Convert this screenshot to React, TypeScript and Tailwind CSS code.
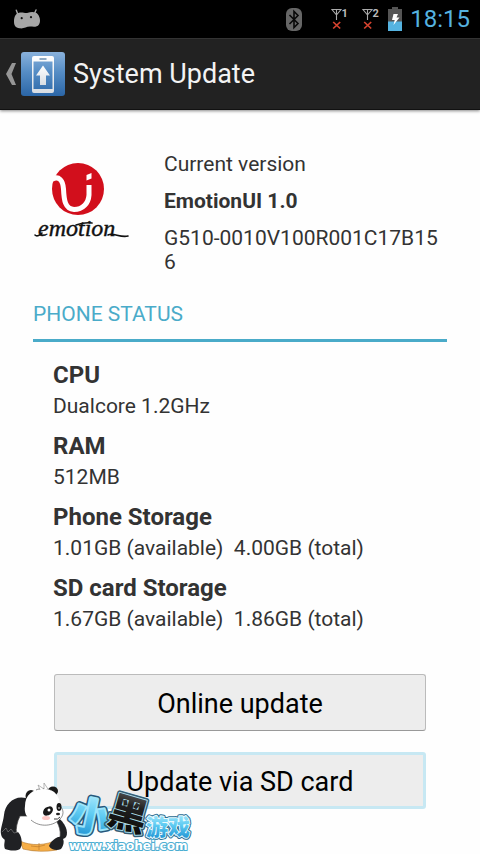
const specs = [
  { name: "CPU", value: "Dualcore 1.2GHz" },
  { name: "RAM", value: "512MB" },
  { name: "Phone Storage", value: "1.01GB (available)\u00a0 4.00GB (total)" },
  { name: "SD card Storage", value: "1.67GB (available)\u00a0 1.86GB (total)" },
];

function AndroidHead() {
  return (
    <svg className="h-5 w-7" viewBox="0 0 28 20" aria-hidden="true">
      <path d="M3.3 1.2 5 5.8M23 1 21.4 4.8" stroke="#a6a6a6" strokeWidth="1.4" strokeLinecap="round" />
      <path d="M6 3.7C10 3 12 4.500 15 3.800C18 2.600 23 2.500 25 5.500C27.500 9 27.500 13 26 15.500C24 18.500 20.500 17.600 17 17.600C13 17.600 11 20 6.500 19.300C2.600 18.700 1 16.500 1 12.500C1 8 2.500 4.600 6 3.700Z" fill="#a6a6a6" />
      <circle cx="8.700" cy="9.200" r="1.100" fill="#111" />
      <circle cx="18" cy="8.200" r="1.100" fill="#111" />
    </svg>
  );
}

function Bluetooth() {
  return (
    <svg className="h-[23px] w-4" viewBox="0 0 16 23" aria-hidden="true">
      <rect x="0" y="0" width="16" height="23" rx="6" fill="#666" />
      <path d="M3.500 7 12 15.500 8 19.500V3.500L12 7.500 3.500 16" fill="none" stroke="#080808" strokeWidth="1.600" />
    </svg>
  );
}

function Signal({ slot }: { slot: string }) {
  return (
    <svg className="h-6 w-[18px]" viewBox="0 0 18 24" aria-label={`SIM ${slot} no signal`}>
      <path d="M1 2.500H10L5.500 8ZM5.500 2.500V13" fill="none" stroke="#aaa" strokeWidth="1.100" />
      <path d="M2.200 15 9.200 21.500M9.200 15 2.200 21.500" stroke="#d6432f" strokeWidth="1.700" />
      <text x="10.500" y="10" fill="#bbb" fontFamily="Roboto, sans-serif" fontWeight="700" fontSize="11">{slot}</text>
    </svg>
  );
}

function Battery() {
  return (
    <svg className="h-6 w-3.5" viewBox="0 0 14 24" aria-hidden="true">
      <path d="M4 0h6v2h4v13H0V2h4Z" fill="#555" />
      <path d="M0 14.500h14V24H0Z" fill="#55b3e0" />
      <path d="M5.500 7H10L8.500 10.500H11.500L5.500 18 6.700 13H4Z" fill="#fff" />
    </svg>
  );
}

function UpdateIcon() {
  return (
    <svg className="h-11 w-11" viewBox="0 0 44 44" aria-hidden="true">
      <defs>
        <linearGradient id="tile" x1="0" y1="0" x2="0" y2="1">
          <stop offset="0" stopColor="#8ab2dc" />
          <stop offset=".45" stopColor="#568dc5" />
          <stop offset="1" stopColor="#2b66a7" />
        </linearGradient>
        <linearGradient id="metal" x1="0" y1="0" x2="0" y2="1">
          <stop offset="0" stopColor="#fff" />
          <stop offset="1" stopColor="#d8dde3" />
        </linearGradient>
      </defs>
      <rect width="44" height="44" rx="3" fill="url(#tile)" />
      <path fillRule="evenodd" d="M13 4h18q2 0 2 2v33q0 2-2 2H13q-2 0-2-2V6q0-2 2-2ZM12.500 9.500v27.500h19V9.500Z" fill="url(#metal)" />
      <path d="M18.500 7h7" stroke="#557da5" strokeWidth="1.300" />
      <path d="M22 13.500 29 23.500H25V33H19V23.500H15Z" fill="url(#metal)" />
    </svg>
  );
}

function EmotionLogo() {
  return (
    <svg className="h-24 w-24" viewBox="0 0 96 96" aria-label="emotion UI">
      <circle cx="45" cy="37" r="26" fill="#d20f1c" />
      <path d="M19 27.500C26 23 30 29 30.500 37C31 48 32 57 41 57.500C50 57.500 55.500 51 56 43V33" fill="none" stroke="#fff" strokeWidth="5" />
      <path d="M53.500 23 58.500 21V26.500L53.500 28.500Z" fill="#fff" />
      <text x="5" y="84" fill="#111" stroke="#111" strokeWidth=".400" fontFamily="Liberation Serif, serif" fontStyle="italic" fontSize="24">emotion</text>
      <path d="M2 83C4 85 7 83 9 81M75 83C80 80 87 86 95 84M43 73C49 71 53 70 59 71" fill="none" stroke="#111" strokeWidth="1.600" strokeLinecap="round" />
    </svg>
  );
}

function Watermark() {
  return (
    <svg className="pointer-events-none absolute bottom-0 left-0 h-[104px] w-[220px]" viewBox="0 -30 220 104" aria-label="小黑游戏 www.xiaohei.com">
      <defs>
        <linearGradient id="ice" x1="0" y1="0" x2="0" y2="1">
          <stop offset="0" stopColor="#c5f4ff" />
          <stop offset=".5" stopColor="#5ecbf2" />
          <stop offset="1" stopColor="#168bcf" />
        </linearGradient>
        <linearGradient id="ink" x1="0" y1="0" x2="0" y2="1">
          <stop offset="0" stopColor="#777" />
          <stop offset=".4" stopColor="#222" />
          <stop offset="1" stopColor="#050505" />
        </linearGradient>
      </defs>
      <path d="M26 18C14 15 5 24 4 35C3 43 0 49 1 54C2 60 7 61 11 59L20 49 31 29Z" fill="#202124" />
      <path d="M57 37C65 42 69 52 66 57C64 60 58 60 55 58Z" fill="#202124" />
      <path d="M20 36C14 48 15 61 24 67C34 73 51 71 58 62C63 54 59 43 53 36Z" fill="#fff" stroke="#444" strokeWidth=".700" />
      <path d="M20 61C30 66 47 66 58 59L57 70Q39 73 23 69Z" fill="#f6ae47" stroke="#b37830" strokeWidth=".600" />
      <path d="M31 66Q38 68 45 65M39 63V70" fill="none" stroke="#bd7c2f" strokeWidth=".700" />
      <path d="M3 51 6 48 8 52 11 49 14 53 18 52C22 56 23 65 20 69C15 72 8 70 5 69C3 64 6 61 4 58ZM58 57C65 56 65 64 61 69C57 71 51 70 49 66C51 61 54 59 58 57Z" fill="#202124" />
      <path d="M2 52 6 48 8 52 11 49 14 53 18 52" fill="none" stroke="#999" strokeWidth=".500" />
      <ellipse cx="31" cy="16" rx="5.500" ry="6" fill="#191919" />
      <ellipse cx="53" cy="11" rx="5" ry="4.500" fill="#191919" />
      <path d="M25 26C25 14 34 8 45 9C55 9 60 17 60 26C64 30 64 35 60 39C54 46 40 48 31 40C26 37 24 32 25 26Z" fill="#fff" />
      <path d="M36 10C40 8 47 8 51 10M60 26C64 30 64 35 60 39C54 46 40 48 31 40" fill="none" stroke="#444" strokeWidth=".600" />
      <path d="M40 10 38 5 44 9 44 3 48 9" fill="#fff" stroke="#888" strokeWidth=".600" />
      <ellipse cx="48" cy="31" rx="5.500" ry="4" transform="rotate(-38 48 31)" fill="#191919" />
      <ellipse cx="59" cy="27" rx="2.500" ry="4" fill="#191919" />
      <circle cx="49" cy="30" r="1.500" fill="#fff" />
      <circle cx="59" cy="28" r=".800" fill="#fff" />
      <ellipse cx="58" cy="34" rx="2" ry="1.200" fill="#222" />
      <path d="M54 39Q58 40 60 37" fill="none" stroke="#222" strokeWidth=".900" />
      <ellipse cx="46" cy="38" rx="4" ry="2" fill="#ffc9c6" />
      <g fontFamily="Noto Sans CJK SC, sans-serif" fontWeight="900" strokeLinejoin="round" paintOrder="stroke">
        <g transform="rotate(12 90 34)" fontSize="39">
          <text x="71" y="51" fill="#285779" stroke="#285779" strokeWidth="7">小</text>
          <text x="71" y="51" fill="url(#ice)" stroke="#9be4fb" strokeWidth="4">小</text>
        </g>
        <g transform="rotate(16 128 33)" fontSize="39">
          <text x="109" y="48" fill="#345d75" stroke="#345d75" strokeWidth="5">黑</text>
          <text x="109" y="48" fill="url(#ink)" stroke="#a9dce9" strokeWidth="2">黑</text>
        </g>
        <g fontSize="22">
          <text x="146" y="55" fill="#286b91" stroke="#286b91" strokeWidth="4">游戏</text>
          <text x="146" y="55" fill="url(#ice)" stroke="#e9fbff" strokeWidth="2">游戏</text>
        </g>
      </g>
      <text x="69" y="70" fill="#fff" stroke="#4caed2" strokeWidth="2" strokeLinejoin="round" paintOrder="stroke" fontFamily="DejaVu Sans, sans-serif" fontWeight="700" fontSize="12">www.xiaohei.com</text>
    </svg>
  );
}

export default function App() {
  return (
    <div className="relative min-h-screen bg-[#fefefe] font-['Roboto',sans-serif] text-[#333]">
      <div className="flex h-[38px] items-center justify-between bg-black pr-[10px] pl-[13px]">
        <AndroidHead />
        <div className="flex items-center">
          <Bluetooth />
          <div className="ml-[29px] flex gap-[13px]">
            <Signal slot="1" />
            <Signal slot="2" />
          </div>
          <div className="ml-2 flex items-center gap-2">
            <Battery />
            <time className="text-2xl text-[#55b3e0]">18:15</time>
          </div>
        </div>
      </div>
      <header className="flex h-[72px] items-center border-t border-b border-t-[#333] border-b-[#111] bg-[#222] pl-[6px] shadow-[0_1px_3px_#0007]">
        <button className="flex items-center gap-1" aria-label="Back">
          <svg className="h-6 w-[11px]" viewBox="0 0 11 24" aria-hidden="true">
            <path d="M6 1h4L5.500 12 10 23H6L0 12Z" fill="#969696" />
          </svg>
          <UpdateIcon />
        </button>
        <h1 className="ml-2 text-[27px] leading-8 text-[#f3f3f3]">System Update</h1>
      </header>
      <main className="px-[33px] pt-[42px] pb-11">
        <section className="flex">
          <div className="w-[131px] shrink-0">
            <EmotionLogo />
          </div>
          <div className="flex min-w-0 flex-1 flex-col gap-[13px] text-[21px] leading-6">
            <p>Current version</p>
            <p className="font-bold">EmotionUI 1.0</p>
            <p className="break-all">G510-0010V100R001C17B156</p>
          </div>
        </section>
        <section className="mt-7">
          <h2 className="border-b-[3px] border-[#4aabc9] pb-[13px] text-[21px] leading-6 text-[#4aabc9]">PHONE STATUS</h2>
          <dl className="mt-[19px] flex flex-col gap-[14px] px-5">
            {specs.map((s) => (
              <div key={s.name} className="flex flex-col gap-[5px]">
                <dt className="text-2xl leading-7 font-bold">{s.name}</dt>
                <dd className="text-[21px] leading-6">{s.value}</dd>
              </div>
            ))}
          </dl>
        </section>
        <div className="mt-[43px] flex flex-col gap-[21px] px-[21px] text-[27px] text-black">
          <button className="h-[57px] rounded-[3px] border border-[#bbb] border-b-[#999] bg-[#ededed] pt-1">Online update</button>
          <button className="h-[57px] rounded-[3px] border-3 border-[#c7e8f3] bg-[#ededed] pt-1">Update via SD card</button>
        </div>
      </main>
      <Watermark />
    </div>
  );
}
